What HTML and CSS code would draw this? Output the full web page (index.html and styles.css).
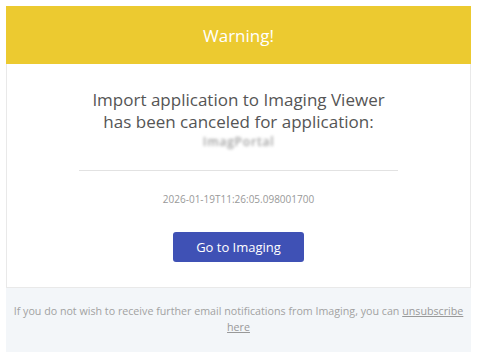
FILE: index.html
```html
<!DOCTYPE html>
<html lang="en">
<head>
  <meta charset="UTF-8" />
  <title>Warning</title>
  <meta name="viewport" content="width=device-width, initial-scale=1.0" />
  <link rel="stylesheet" href="styles.css">
</head>
<body>
  <div class="mail">
    <div class="card">
      <div class="header">Warning!</div>

      <div class="content">
        <p class="message">
          Import application to Imaging Viewer<br>
          has been canceled for application:
        </p>
        <div class="app-name">ImagPortal</div>

        <hr class="divider">

        <p class="stamp">2026-01-19T11:26:05.098001700</p>

        <a class="action" href="#">Go to Imaging</a>
      </div>
    </div>

    <div class="footer">
      If you do not wish to receive further email notifications from Imaging, you can <a href="#">unsubscribe</a> <a href="#">here</a>
    </div>
  </div>
</body>
</html>
```

FILE: styles.css
```css
body {
  margin: 0;
  padding: 6px;
  background: #ffffff;
  font-family: "Open Sans", "Noto Sans", sans-serif;
}

.mail {
  width: 465px;
}

.card {
  background: #ffffff;
  border: 1px solid #e9e9e9;
  border-top: none;
}

.header {
  background: #ecca30;
  color: #ffffff;
  height: 58px;
  display: flex;
  align-items: center;
  justify-content: center;
  font-size: 17px;
  margin: 0 -1px;
}

.content {
  padding: 25px 72px 25px;
  text-align: center;
}

.message {
  margin: 0;
  font-size: 17px;
  line-height: 22px;
  color: #555555;
}

.app-name {
  font-size: 12px;
  line-height: 17px;
  font-weight: 600;
  letter-spacing: 0.8px;
  color: #a0a0a0;
  filter: blur(1.4px);
}

.divider {
  border: none;
  border-top: 1px solid #e2e2e2;
  margin: 20px 0 0;
}

.stamp {
  margin: 21px 0 0;
  font-size: 10px;
  line-height: 15px;
  color: #999999;
}

.action {
  display: inline-block;
  margin-top: 25px;
  width: 131px;
  height: 30px;
  line-height: 30px;
  background: #3f51b5;
  color: #ffffff;
  font-size: 13px;
  text-decoration: none;
  border-radius: 3px;
}

.footer {
  background: #f3f6f9;
  padding: 15px 6px 17px;
  text-align: center;
  font-size: 10.7px;
  line-height: 16px;
  color: #a2a2a2;
}

.footer a {
  color: #999999;
}
```
